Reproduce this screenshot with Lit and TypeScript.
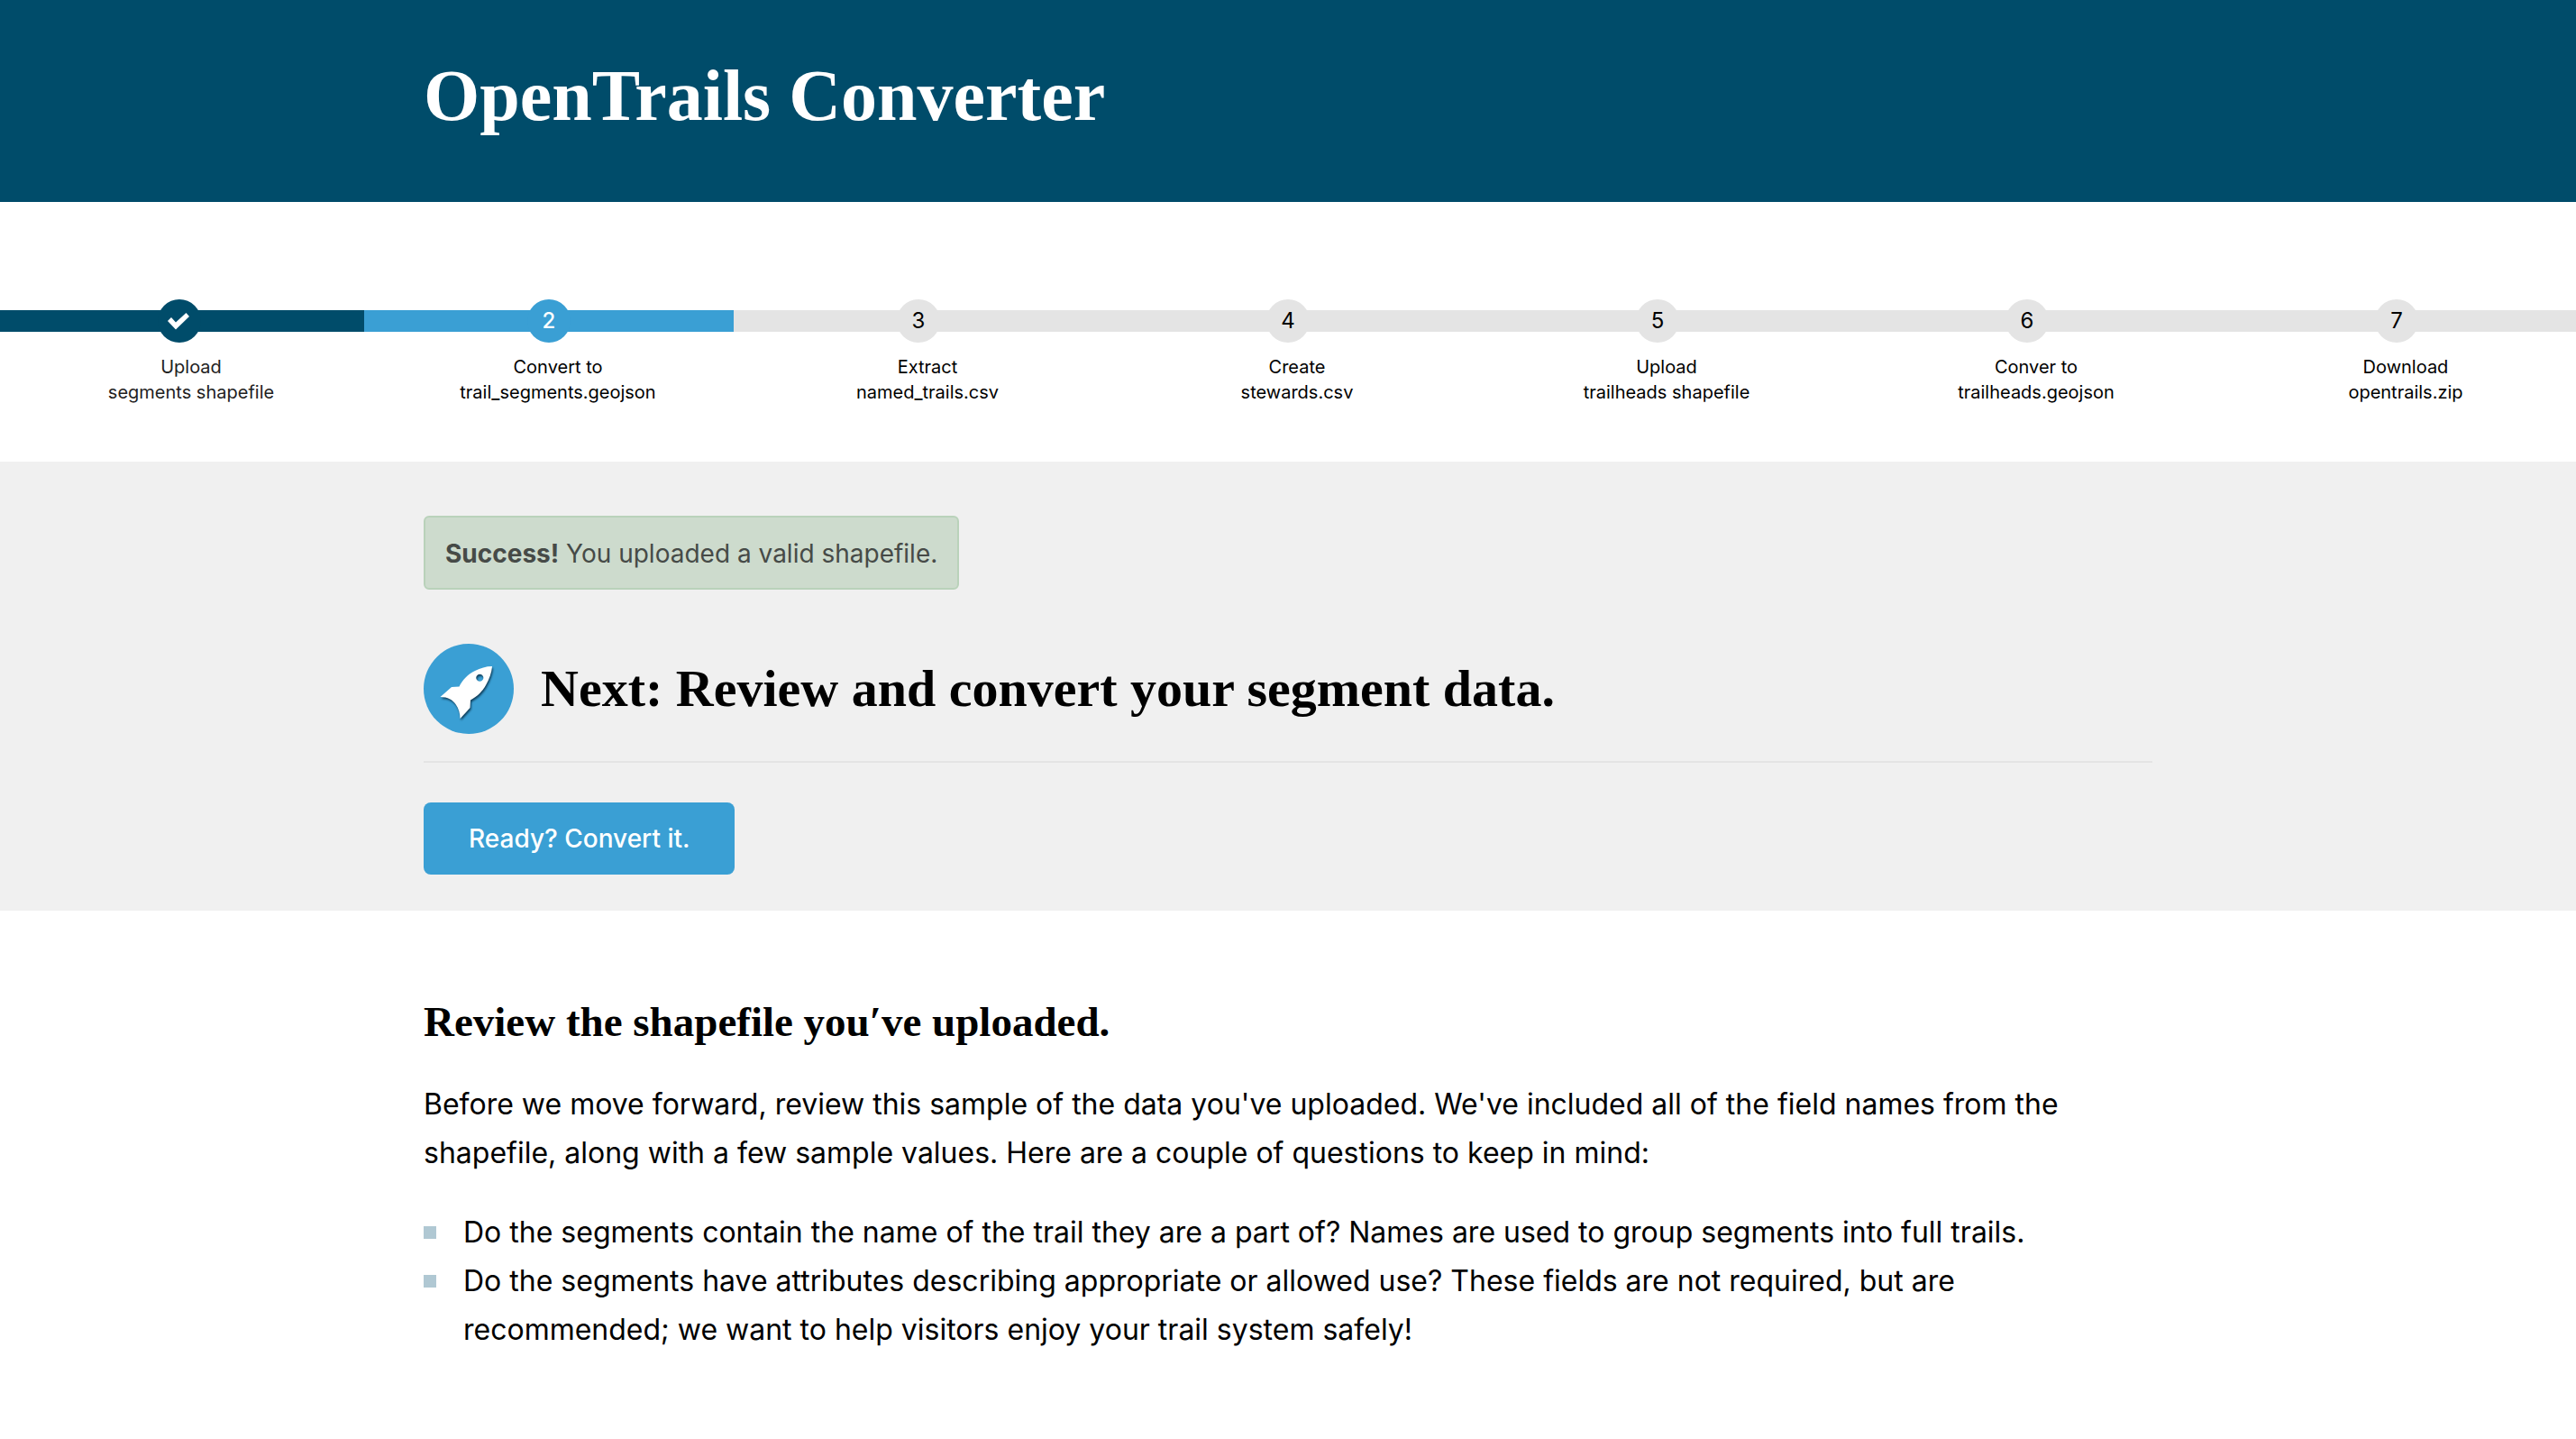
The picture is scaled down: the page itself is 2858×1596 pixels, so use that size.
import { LitElement, html, css, svg } from "lit";
import { customElement, property } from "lit/decorators.js";
import { classMap } from "lit/directives/class-map.js";

type StepState = "done" | "current" | "upcoming";

interface Step {
  action: string;
  subject: string;
}

const STEPS: Step[] = [
  { action: "Upload", subject: "segments shapefile" },
  { action: "Convert to", subject: "trail_segments.geojson" },
  { action: "Extract", subject: "named_trails.csv" },
  { action: "Create", subject: "stewards.csv" },
  { action: "Upload", subject: "trailheads shapefile" },
  { action: "Conver to", subject: "trailheads.geojson" },
  { action: "Download", subject: "opentrails.zip" },
];

const checkIcon = svg`<svg class="check" viewBox="0 0 48 48" role="img" aria-label="Done">
  <path d="M11 24 L15 20 L20 25.5 L31.5 15 L35 19 L20 33.5 Z" fill="#fff" />
</svg>`;

@customElement("progress-steps")
export class ProgressSteps extends LitElement {
  @property({ type: Number }) current = 1;

  static styles = css`
    :host {
      display: block;
      overflow: hidden;
      padding: 108px 0 63px;
      background: #fff;
    }
    .steps {
      display: grid;
      grid-template-columns: repeat(7, minmax(0, 1fr));
      margin: 0 -6px;
      padding: 0;
      list-style: none;
    }
    .step {
      --tone: #e4e4e4;
      --ink: #000;
    }
    .done {
      --tone: #004c6a;
      --ink: #fff;
    }
    .current {
      --tone: #3a9fd4;
      --ink: #fff;
    }
    .track {
      display: flex;
      justify-content: center;
      background: linear-gradient(var(--tone), var(--tone)) center / 100% 24px no-repeat;
    }
    .marker {
      display: flex;
      align-items: center;
      justify-content: center;
      width: 48px;
      height: 48px;
      border-radius: 50%;
      background: var(--tone);
      color: var(--ink);
      font-size: 24px;
      line-height: 28px;
    }
    .current .marker {
      font-weight: 500;
    }
    .check {
      width: 48px;
      height: 48px;
    }
    .label {
      margin: 13px 0 0;
      padding-left: 20px;
      font-size: 20px;
      line-height: 28px;
      text-align: center;
      color: #000;
    }
    .done .label {
      padding-left: 26px;
      color: #222;
    }
    .line {
      display: block;
    }
  `;

  private stateOf(n: number): StepState {
    if (n < this.current) return "done";
    return n === this.current ? "current" : "upcoming";
  }

  render() {
    return html`<ol class="steps">
      ${STEPS.map((step, i) => {
        const state = this.stateOf(i + 1);
        return html`<li class=${classMap({ step: true, [state]: true })}>
          <div class="track">
            <div class="marker">${state === "done" ? checkIcon : i + 1}</div>
          </div>
          <p class="label">
            <span class="line">${step.action}</span>
            <span class="line">${step.subject}</span>
          </p>
        </li>`;
      })}
    </ol>`;
  }
}

@customElement("app-root")
export class AppRoot extends LitElement {
  static styles = css`
    :host {
      display: block;
      min-height: 100vh;
      background: #fff;
      color: #000;
      font-family: Inter, "Liberation Sans", sans-serif;
    }
    .container {
      box-sizing: border-box;
      max-width: 1918px;
      margin: 0 auto;
    }
    h1,
    h2,
    h3 {
      margin: 0;
      font-family: "Liberation Serif", serif;
      font-weight: 700;
    }
    .masthead {
      padding: 61px 0 73px;
      background: #004c6a;
      color: #fff;
    }
    h1 {
      font-size: 80px;
      line-height: 90px;
    }
    .next {
      padding: 60px 0 40px;
      background: #f0f0f0;
    }
    .alert {
      width: fit-content;
      margin: 0 0 60px;
      padding: 21px 22px 19px;
      border: 2px solid #b9d2ba;
      border-radius: 6px;
      background: #cddbcd;
      color: #464a47;
      font-size: 28px;
      line-height: 38px;
    }
    .heading {
      display: flex;
      align-items: center;
      gap: 30px;
      padding-bottom: 30px;
      border-bottom: 2px solid #e4e4e4;
    }
    .badge {
      flex: none;
      width: 100px;
      height: 100px;
    }
    .rocket {
      filter: drop-shadow(1px 2px 1px rgba(0, 30, 50, 0.75));
    }
    h2 {
      font-size: 58px;
      line-height: 70px;
    }
    .convert {
      display: block;
      margin: 44px 0 0;
      padding: 20px 50px;
      border: 0;
      border-radius: 8px;
      background: #3a9fd4;
      color: #fff;
      font-family: inherit;
      font-size: 28px;
      font-weight: 500;
      line-height: 40px;
      cursor: pointer;
    }
    .review {
      padding: 95px 0 80px;
    }
    h3 {
      font-size: 47px;
      line-height: 56px;
    }
    .intro {
      margin: 37px 0 34px;
      font-size: 32px;
      line-height: 54px;
    }
    .questions {
      margin: 0;
      padding: 0;
      list-style: none;
      font-size: 32px;
      line-height: 54px;
    }
    .question {
      display: flex;
      align-items: flex-start;
      gap: 30px;
    }
    .question::before {
      content: "";
      flex: none;
      width: 14px;
      height: 14px;
      margin-top: 20px;
      background: #b0c8d3;
    }
  `;

  render() {
    return html`
      <header class="masthead">
        <div class="container"><h1>OpenTrails Converter</h1></div>
      </header>
      <progress-steps .current=${2}></progress-steps>
      <main>
        <section class="next">
          <div class="container">
            <p class="alert" role="status"><strong>Success!</strong> You uploaded a valid shapefile.</p>
            <div class="heading">
              <svg class="badge" viewBox="0 0 100 100" aria-hidden="true">
                <circle cx="50" cy="50" r="50" fill="#3a9fd4" />
                <path
                  class="rocket"
                  fill="#fff"
                  fill-rule="evenodd"
                  d="M76 25 C69 25 63 27 57 30 C49 34 43 40 39.5 47.5 L31 48 L18.5 59 C27 59 32 62 35.5 67 C39 72 40.5 77 40.5 83 C44 79 47 76 51.5 71 L52 62.5 C60 58 65 53 69 46 C73 39 75.5 32 76 25 Z M62.3 33.7 a4 4 0 1 0 0.01 0 Z"
                />
              </svg>
              <h2>Next: Review and convert your segment data.</h2>
            </div>
            <button class="convert" type="button">Ready? Convert it.</button>
          </div>
        </section>
        <section class="review">
          <div class="container">
            <h3>Review the shapefile you′ve uploaded.</h3>
            <p class="intro">
              Before we move forward, review this sample of the data you've uploaded. We've included all of the field
              names from the shapefile, along with a few sample values. Here are a couple of questions to keep in mind:
            </p>
            <ul class="questions">
              <li class="question">
                <span>Do the segments contain the name of the trail they are a part of? Names are used to group segments into full trails.</span>
              </li>
              <li class="question">
                <span>Do the segments have attributes describing appropriate or allowed use? These fields are not required, but are recommended; we want to help visitors enjoy your trail system safely!</span>
              </li>
            </ul>
          </div>
        </section>
      </main>
    `;
  }
}
